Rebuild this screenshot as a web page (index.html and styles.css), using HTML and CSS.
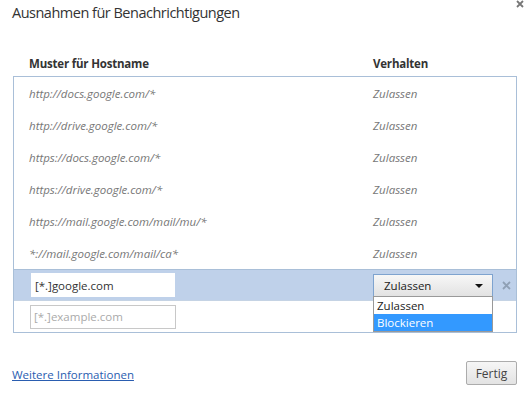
FILE: index.html
```html
<!DOCTYPE html>
<html lang="de">
<head>
<meta charset="utf-8">
<link rel="stylesheet" href="styles.css">
</head>
<body>
<div class="dialog">
  <header class="top">
    <h1 class="title">Ausnahmen für Benachrichtigungen</h1>
    <svg class="close" width="8" height="8" viewBox="0 0 8 8"><path d="M1 1L7 7M7 1L1 7" stroke="#777" stroke-width="1.8"/></svg>
  </header>
  <div class="colhead">
    <span class="c1">Muster für Hostname</span>
    <span class="c2">Verhalten</span>
  </div>
  <div class="list">
    <div class="row"><span class="c1">http://docs.google.com/*</span><span class="c2">Zulassen</span></div>
    <div class="row"><span class="c1">http://drive.google.com/*</span><span class="c2">Zulassen</span></div>
    <div class="row"><span class="c1">https://docs.google.com/*</span><span class="c2">Zulassen</span></div>
    <div class="row"><span class="c1">https://drive.google.com/*</span><span class="c2">Zulassen</span></div>
    <div class="row"><span class="c1">https://mail.google.com/mail/mu/*</span><span class="c2">Zulassen</span></div>
    <div class="row"><span class="c1">*://mail.google.com/mail/ca*</span><span class="c2">Zulassen</span></div>
    <div class="row sel">
      <span class="c1"><span class="input">[*.]google.com</span></span>
      <span class="c2">
        <span class="select">Zulassen<span class="arrow"></span></span>
        <span class="popup">
          <span class="opt">Zulassen</span>
          <span class="opt on">Blockieren</span>
        </span>
      </span>
      <svg class="del" width="9" height="9" viewBox="0 0 9 9"><path d="M1 1L8 8M8 1L1 8" stroke="#8fa0b5" stroke-width="1.8"/></svg>
    </div>
    <div class="row new">
      <span class="c1"><span class="input ph">[*.]example.com</span></span>
    </div>
  </div>
  <footer class="foot">
    <a class="link" href="#">Weitere Informationen</a>
    <span class="btn">Fertig</span>
  </footer>
</div>
</body>
</html>
```

FILE: styles.css
```css
html, body {
  margin: 0;
  padding: 0;
  background: #fff;
}
body {
  font-family: "Open Sans", "Noto Sans", sans-serif;
  font-size: 12px;
  color: #333;
}
.dialog {
  width: 532px;
  height: 399px;
  display: flex;
  flex-direction: column;
}
.top {
  display: flex;
  justify-content: space-between;
  align-items: flex-start;
  height: 52px;
}
.title {
  margin: 0;
  padding: 3px 0 0 12px;
  font-size: 14.5px;
  font-weight: normal;
  color: #333;
  line-height: 20px;
  letter-spacing: -0.5px;
}
.close {
  margin: 0 8px 0 0;
  flex: none;
}
.colhead {
  display: flex;
  padding: 0 0 0 29px;
  height: 24px;
  line-height: 24px;
  font-weight: bold;
  font-size: 11.5px;
  letter-spacing: -0.2px;
  color: #333;
}
.c1 {
  width: 344px;
  flex: none;
}
.c2 {
  position: relative;
}
.list {
  margin: 0 15px 0 13px;
  border: 1px solid #a9bfd8;
  display: flex;
  flex-direction: column;
}
.row {
  display: flex;
  align-items: center;
  height: 32px;
  padding-left: 15px;
  font-style: italic;
  color: #777;
  font-size: 11.5px;
}
.row.sel {
  height: 30px;
  background: #bfd1ea;
  border-top: 1px solid #a9bfd8;
  border-bottom: 1px solid #c5d3e4;
  padding-left: 17px;
  font-style: normal;
  color: #222;
}
.row.sel .c1 { width: 342px; }
.row.new {
  padding-left: 16px;
  font-style: normal;
  height: 31px;
}
.input {
  display: flex;
  align-items: center;
  box-sizing: border-box;
  width: 144px;
  height: 24px;
  background: #fff;
  border: 1px solid #fff;
  padding-left: 3px;
  color: #333;
  font-size: 11.5px;
}
.input.ph {
  border: 1px solid #c8c8c8;
  width: 146px;
  color: #aaa;
}
.select {
  display: flex;
  align-items: center;
  justify-content: space-between;
  box-sizing: border-box;
  width: 120px;
  height: 23px;
  margin-top: 1px;
  padding: 0 9px 0 10px;
  border: 1px solid #7ea3cf;
  background: linear-gradient(#f7f7f7, #e2e2e2);
  color: #222;
  font-size: 11.5px;
}
.arrow {
  width: 0;
  height: 0;
  border-left: 4px solid transparent;
  border-right: 4px solid transparent;
  border-top: 4px solid #111;
}
.popup {
  position: absolute;
  left: 0;
  top: 23px;
  width: 120px;
  box-sizing: border-box;
  border: 1px solid #999;
  background: #fff;
  display: flex;
  flex-direction: column;
  z-index: 2;
}
.opt {
  height: 17px;
  line-height: 17px;
  padding-left: 3px;
  color: #222;
  font-size: 11.5px;
}
.opt.on {
  background: #3399ff;
  color: #fff;
}
.del {
  margin-left: 9px;
  flex: none;
}
.foot {
  display: flex;
  justify-content: space-between;
  align-items: center;
  padding: 28px 15px 0 12px;
}
.link {
  color: #2a5db0;
  font-size: 11.5px;
  text-decoration: underline;
  margin-top: 3px;
}
.btn {
  box-sizing: border-box;
  width: 51px;
  height: 24px;
  display: flex;
  align-items: center;
  justify-content: center;
  border: 1px solid #acacac;
  border-radius: 2px;
  background: linear-gradient(#f6f6f6, #e3e3e3);
  color: #444;
  font-size: 12px;
}
```
